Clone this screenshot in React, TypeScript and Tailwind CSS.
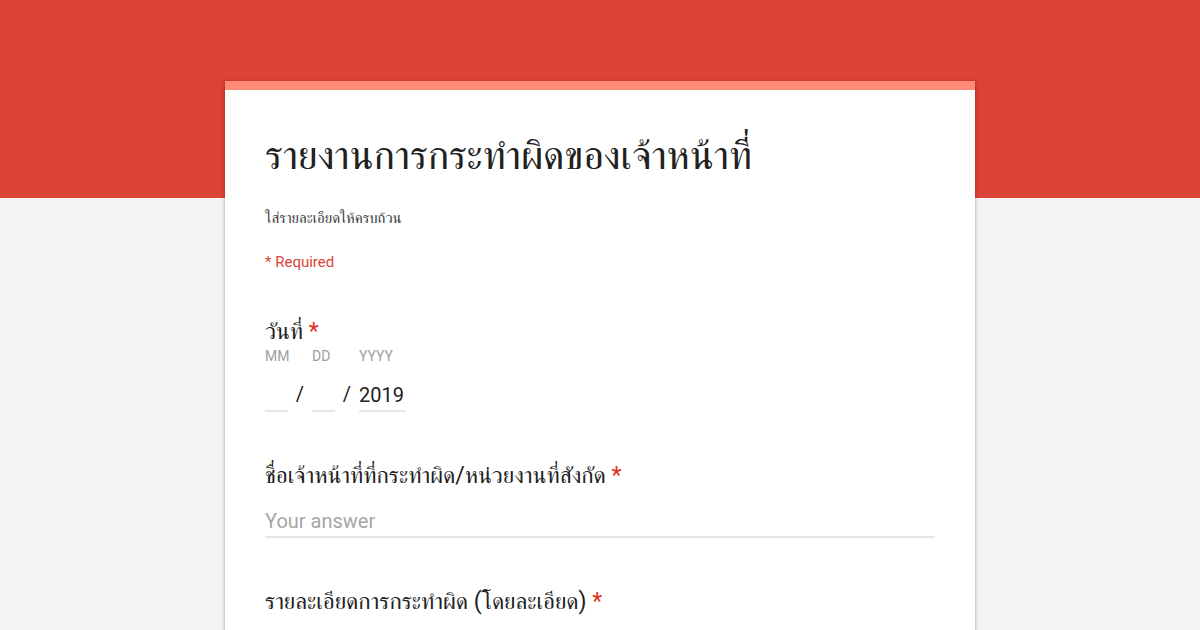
const Star = () => <span className="text-[#e32b20]"> *</span>;

const heading = "block whitespace-nowrap text-[23px] leading-7";
const dateLabel = "flex flex-col text-sm leading-5 text-[#9e9e9e]";
const textBox = "h-8 w-full border-b-2 border-[#e6e6e6] text-xl text-[#212121] outline-none placeholder:text-[#a6a6a6]";

function DatePart({ label, value, wide }: { label: string; value?: string; wide?: boolean }) {
  return (
    <label className={`${dateLabel} ${wide ? "w-[47px]" : "w-[23px]"}`}>
      {label}
      <input defaultValue={value} className={`mt-3.5 ${textBox}`} />
    </label>
  );
}

function Question({ title }: { title: string }) {
  return (
    <label className="mt-[50px] block">
      <span className={heading}>{title}<Star /></span>
      <input placeholder="Your answer" className={`mt-4 ${textBox}`} />
    </label>
  );
}

export default function App() {
  return (
    <div className="h-screen overflow-hidden bg-[linear-gradient(#db4437_198px,#f4f4f4_198px)] pt-[81px] font-['Roboto','FreeSerif',sans-serif] text-[#212121]">
      <main className="mx-auto min-h-screen max-w-[750px] border-t-9 border-[#ff8a75] bg-white px-10 pt-8 shadow-[0_1px_4px_rgba(0,0,0,0.35)]">
        <form>
          <h1 className="text-[40px] leading-[68px] whitespace-nowrap">รายงานการกระทำผิดของเจ้าหน้าที่</h1>
          <p className="mt-4 text-[15px] leading-6 text-[#3c3c3c]">ใส่รายละเอียดให้ครบถ้วน</p>
          <p className="mt-5 text-[15px] leading-6 text-[#db4437]">* Required</p>
          <fieldset className="mt-11">
            <legend className={heading}>วันที่<Star /></legend>
            <div className="flex items-end text-xl">
              <DatePart label="MM" />
              <span className="w-6 pb-1 text-center">/</span>
              <DatePart label="DD" />
              <span className="w-6 pb-1 text-center">/</span>
              <DatePart label="YYYY" value="2019" wide />
            </div>
          </fieldset>
          <Question title="ชื่อเจ้าหน้าที่ที่กระทำผิด/หน่วยงานที่สังกัด" />
          <Question title="รายละเอียดการกระทำผิด (โดยละเอียด)" />
        </form>
      </main>
    </div>
  );
}
